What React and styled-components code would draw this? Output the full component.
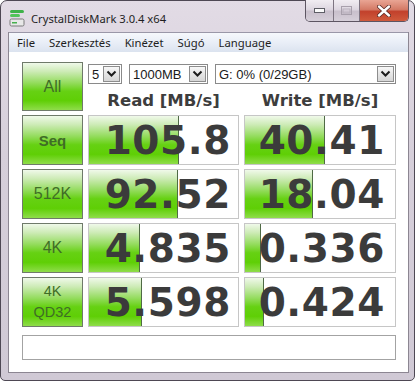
import React from "react";
import styled, { createGlobalStyle } from "styled-components";

const GlobalStyle = createGlobalStyle`
  html, body {
    margin: 0;
    padding: 0;
    background: #ffffff;
  }
  body {
    width: 416px;
    height: 382px;
    overflow: hidden;
  }
`;

const GREEN = `linear-gradient(180deg, #f0f9ea 0%, #cdebb6 18%, #94dc5e 42%, #66d113 60%, #5fcf06 80%, #8fdd4a 100%)`;

const Window = styled.div`
  width: 415px;
  height: 381px;
  box-sizing: border-box;
  display: flex;
  flex-direction: column;
  background: linear-gradient(180deg, #e2dbe5 0%, #d6cfda 40%, #d0c9d5 100%);
  border: 1px solid #4e4854;
  border-radius: 7px 7px 5px 5px;
  padding: 0 5px 7px 7px;
  font-family: "Liberation Sans", Arial, sans-serif;
`;

const TitleBar = styled.div`
  height: 31px;
  display: flex;
  align-items: center;
`;

const AppIcon = styled.svg`
  width: 16px;
  height: 18px;
  margin-left: 1px;
  margin-top: 2px;
`;

const Title = styled.span`
  margin-left: 6px;
  margin-top: 3px;
  font-family: "Noto Sans", "Open Sans", sans-serif;
  font-size: 11.2px;
  color: #1e1e1e;
`;

const Controls = styled.div`
  margin-left: auto;
  align-self: flex-start;
  margin-top: -1px;
  display: flex;
  height: 21px;
  border: 1px solid #5d5562;
  border-top: none;
  border-radius: 0 0 5px 5px;
  overflow: hidden;
`;

const CtlButton = styled.div`
  width: ${(p) => p.$w}px;
  height: 100%;
  display: flex;
  align-items: center;
  justify-content: center;
  border-left: ${(p) => (p.$first ? "none" : "1px solid #7d7481")};
  background: ${(p) =>
    p.$close
      ? "linear-gradient(180deg, #e9a594 0%, #d47a66 45%, #c2412c 55%, #cf5a3c 100%)"
      : "linear-gradient(180deg, #f1edf2 0%, #ddd6e0 45%, #c9c0cc 55%, #d6cfd9 100%)"};
`;

const Client = styled.div`
  flex: 1;
  display: flex;
  flex-direction: column;
  border: 1px solid #8c8692;
  border-top: none;
`;

const MenuBar = styled.div`
  height: 19px;
  display: flex;
  align-items: center;
  padding-left: 1px;
  background: linear-gradient(180deg, #f6f8fc 0%, #e9eef7 50%, #dbe3ef 100%);
  border-top: 1px solid #9a97a8;
`;

const MenuItem = styled.span`
  padding: 0 7px;
  font-family: "Noto Sans", "Open Sans", sans-serif;
  font-size: 11.3px;
  color: #1e1e1e;
`;

const Content = styled.div`
  flex: 1;
  background: #ffffff;
  padding: 10px 12px 0 13px;
  display: grid;
  grid-template-columns: 61px 151px 152px;
  grid-template-rows: 49px repeat(4, 50px) 29px;
  column-gap: 5px;
  row-gap: 4px;
`;

const TestButton = styled.div`
  box-sizing: border-box;
  border: 1px solid #6f7a6a;
  background: ${GREEN};
  display: flex;
  flex-direction: column;
  align-items: center;
  justify-content: center;
  font-size: ${(p) => p.$size || 16}px;
  font-weight: ${(p) => (p.$bold ? "bold" : "normal")};
  line-height: ${(p) => (p.$tall ? "21px" : "normal")};
  color: #3f6d26;
`;

const TopPanel = styled.div`
  grid-column: 2 / 4;
  display: flex;
  flex-direction: column;
`;

const SelectRow = styled.div`
  display: flex;
  gap: 7px;
  margin-top: 2px;
`;

const Select = styled.div`
  box-sizing: border-box;
  width: ${(p) => p.$w}px;
  height: 20px;
  border: 1px solid #8a8a8a;
  background: #ffffff;
  display: flex;
  align-items: center;
  font-size: 13px;
  color: #1a1a1a;
  padding-left: 3px;
`;

const SelectText = styled.span`
  flex: 1;
`;

const Arrow = styled.div`
  box-sizing: border-box;
  width: 17px;
  height: 16px;
  margin-right: 1px;
  border: 1px solid #8d8d8d;
  background: linear-gradient(180deg, #f7f7f7 0%, #e6e6e6 50%, #d6d6d6 100%);
  display: flex;
  align-items: center;
  justify-content: center;
`;

const Headers = styled.div`
  display: grid;
  grid-template-columns: 151px 152px;
  column-gap: 5px;
  margin-top: 8px;
`;

const Header = styled.div`
  text-align: center;
  font-family: "DejaVu Sans", Verdana, sans-serif;
  font-weight: bold;
  font-size: 16.5px;
  line-height: 18px;
  color: #3d3d3d;
`;

const Cell = styled.div`
  position: relative;
  box-sizing: border-box;
  border: 1px solid #c6c6c6;
  background: #ffffff;
  overflow: hidden;
  display: flex;
  align-items: center;
  justify-content: flex-end;
  padding-right: ${(p) => p.$pad}px;
`;

const Bar = styled.div`
  position: absolute;
  left: 0;
  top: 0;
  bottom: 0;
  background: ${GREEN};
  border-right: 1px solid #4f6a45;
`;

const Value = styled.span`
  position: relative;
  font-family: "DejaVu Sans", Verdana, sans-serif;
  font-weight: bold;
  font-size: 39px;
  letter-spacing: 0.6px;
  line-height: 1;
  color: #3b3b3b;
`;

const Status = styled.div`
  grid-column: 1 / 4;
  box-sizing: border-box;
  margin-top: 4px;
  border: 1px solid #a3a3a3;
  background: #ffffff;
`;

const rows = [
  { label: "Seq", bold: true, size: 15, read: "105.8", rw: 89, write: "40.41", ww: 79 },
  { label: "512K", size: 16, read: "92.52", rw: 88, write: "18.04", ww: 67 },
  { label: "4K", size: 16, read: "4.835", rw: 50, write: "0.336", ww: 15 },
  { label: ["4K", "QD32"], size: 14.5, read: "5.598", rw: 52, write: "0.424", ww: 18 },
];

const Chevron = () => (
  <svg width="11" height="8" viewBox="0 0 11 8">
    <path d="M1.5 1.5 L5.5 5.5 L9.5 1.5" fill="none" stroke="#1c1c1c" strokeWidth="2" />
  </svg>
);

const Combo = ({ w, children }) => (
  <Select $w={w}>
    <SelectText>{children}</SelectText>
    <Arrow>
      <Chevron />
    </Arrow>
  </Select>
);

export default function App() {
  return (
    <>
      <GlobalStyle />
      <Window>
        <TitleBar>
          <AppIcon viewBox="0 0 16 18">
            <rect x="1" y="1" width="14" height="3" rx="1.5" fill="#3fb24a" />
            <rect x="1" y="5" width="10" height="3" rx="1.5" fill="#52c45a" />
            <rect x="1" y="10" width="14" height="7" rx="1.5" fill="#e8e8e8" stroke="#7a7a7a" />
            <rect x="3" y="13" width="5" height="1.5" fill="#46b04e" />
          </AppIcon>
          <Title>CrystalDiskMark 3.0.4 x64</Title>
          <Controls>
            <CtlButton $w={27} $first>
              <svg width="11" height="5" viewBox="0 0 11 5">
                <rect x="0.5" y="0.5" width="10" height="4" fill="#fafafa" stroke="#5e5e66" />
              </svg>
            </CtlButton>
            <CtlButton $w={25}>
              <svg width="11" height="9" viewBox="0 0 11 9">
                <rect x="0.5" y="0.5" width="10" height="8" fill="none" stroke="#a8a0ac" />
                <rect x="2" y="3" width="7" height="4" fill="none" stroke="#b8b0bc" />
              </svg>
            </CtlButton>
            <CtlButton $w={48} $close>
              <svg width="14" height="12" viewBox="0 0 14 12">
                <path d="M2 1.5 L12 10.5 M12 1.5 L2 10.5" stroke="#5a2a24" strokeWidth="4" strokeLinecap="round" />
                <path d="M2 1.5 L12 10.5 M12 1.5 L2 10.5" stroke="#ffffff" strokeWidth="2.4" strokeLinecap="round" />
              </svg>
            </CtlButton>
          </Controls>
        </TitleBar>
        <Client>
          <MenuBar>
            <MenuItem>File</MenuItem>
            <MenuItem>Szerkesztés</MenuItem>
            <MenuItem>Kinézet</MenuItem>
            <MenuItem>Súgó</MenuItem>
            <MenuItem>Language</MenuItem>
          </MenuBar>
          <Content>
            <TestButton $size={16}>All</TestButton>
            <TopPanel>
              <SelectRow>
                <Combo w={34}>5</Combo>
                <Combo w={79}>1000MB</Combo>
                <Combo w={181}>G: 0% (0/29GB)</Combo>
              </SelectRow>
              <Headers>
                <Header>Read [MB/s]</Header>
                <Header>Write [MB/s]</Header>
              </Headers>
            </TopPanel>
            {rows.map((r, i) => (
              <React.Fragment key={i}>
                <TestButton $size={r.size} $bold={r.bold} $tall={Array.isArray(r.label)}>
                  {Array.isArray(r.label) ? r.label.map((l) => <span key={l}>{l}</span>) : r.label}
                </TestButton>
                <Cell $pad={7}>
                  <Bar style={{ width: r.rw }} />
                  <Value>{r.read}</Value>
                </Cell>
                <Cell $pad={10}>
                  <Bar style={{ width: r.ww }} />
                  <Value>{r.write}</Value>
                </Cell>
              </React.Fragment>
            ))}
            <Status />
          </Content>
        </Client>
      </Window>
    </>
  );
}
